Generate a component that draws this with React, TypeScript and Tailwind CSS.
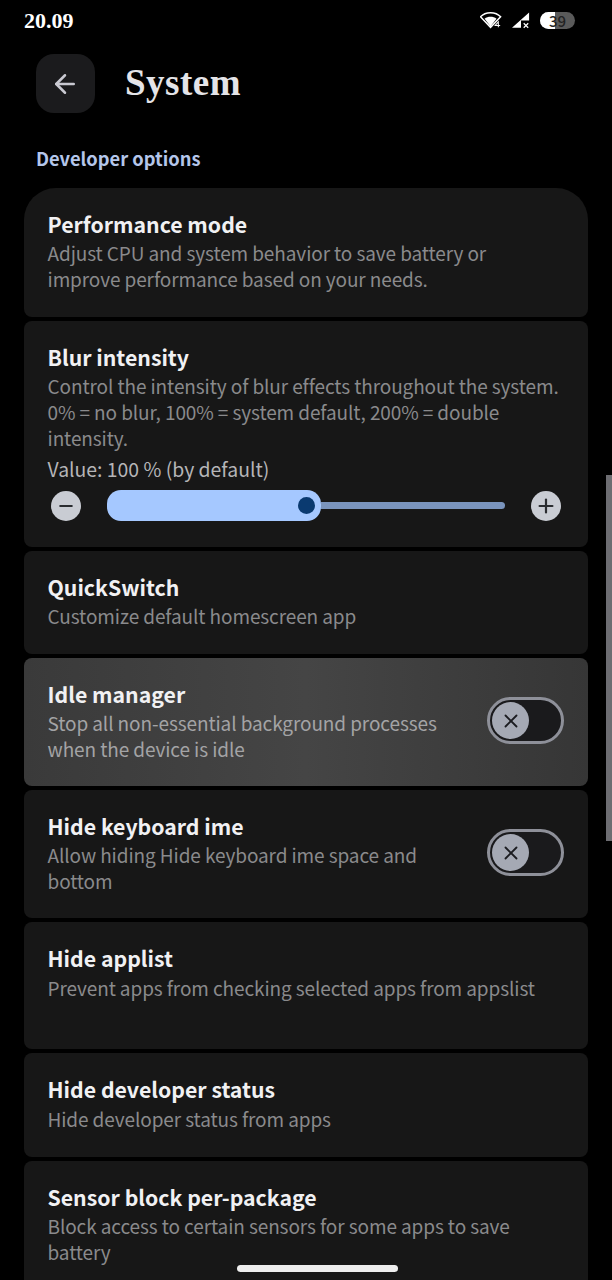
import React from 'react';
import { ArrowLeft, Minus, Plus, X } from 'lucide-react';

const Toggle = () => (
  <div className="w-[77px] h-[47px] shrink-0 rounded-full border-[3px] border-[#8e9099] bg-[#1a1a1c] flex items-center pl-[2px]">
    <div className="w-[37px] h-[37px] rounded-full bg-[#a5a9b4] flex items-center justify-center">
      <X size={22} strokeWidth={2} className="text-[#1b1c20]" />
    </div>
  </div>
);

interface CardProps {
  title: string;
  desc?: string[];
  height: string;
  highlight?: boolean;
  toggle?: boolean;
  top?: boolean;
  loose?: boolean;
  children?: React.ReactNode;
}

const Card = ({ title, desc = [], height, highlight, toggle, top, loose, children }: CardProps) => (
  <div
    className={`${height} shrink-0 pl-[23.5px] pr-6 pt-[22px] flex items-start justify-between ${top ? 'rounded-t-[32px] rounded-b-lg' : 'rounded-lg'} ${
      highlight ? 'bg-gradient-to-r from-[#3a3a3a] via-[#454545] to-[#363636]' : 'bg-[#171717]'
    }`}
  >
    <div className="flex-1 min-w-0">
      <div className={`text-[21.25px] leading-[30px] font-bold text-[#f1f1f3] -mt-px ${loose ? 'mb-[2px]' : 'mb-px'}`}>{title}</div>
      {desc.map((line) => (
        <div
          key={line}
          className={`text-[19px] tracking-[-0.1px] leading-[26px] whitespace-nowrap ${highlight ? 'text-[#a3a3a5]' : 'text-[#8a8a8c]'}`}
        >
          {line}
        </div>
      ))}
      {children}
    </div>
    {toggle && (
      <div className="mt-[17px]">
        <Toggle />
      </div>
    )}
  </div>
);

export default function App() {
  return (
    <div
      className="relative w-[612px] h-[1280px] overflow-hidden bg-black"
      style={{ fontFamily: '"Noto Sans CJK SC", "Noto Sans", sans-serif' }}
    >
      {/* Status bar */}
      <div className="h-[40px] pl-6 pr-[37px] flex items-center justify-between">
        <span className="text-[22px] font-bold text-white" style={{ fontFamily: '"Liberation Serif", serif' }}>
          20.09
        </span>
        <div className="flex items-center gap-[10px]">
          <svg width="22" height="18" viewBox="0 0 24 18">
            <path d="M0.5 5.5 C6 -0.5 17 -0.5 22.5 5.5 L11.5 17 Z" fill="none" stroke="#fff" strokeWidth="1.6" />
            <path d="M5 7.5 C8.5 4.8 14.5 4.8 18 7.5 L11.5 16 Z" fill="#fff" />
            <path d="M20 17 L20 11 L16.5 15 L22 15" fill="none" stroke="#fff" strokeWidth="1.1" />
          </svg>
          <svg width="18" height="17" viewBox="0 0 20 18">
            <path d="M19 0 L19 9 L10 9 L10 17 L0 17 Z" fill="#fff" />
            <path d="M13 12 L18 17 M18 12 L13 17" stroke="#fff" strokeWidth="1.4" />
          </svg>
          <div className="relative w-[35px] h-[17px] rounded-full bg-[#5a5a5a] flex">
            <div className="w-[15px] h-full rounded-l-full bg-white" />
            <span className="absolute inset-0 flex items-center justify-center text-[15px] leading-none font-medium text-[#222]">39</span>
          </div>
        </div>
      </div>

      {/* Header */}
      <div className="mt-[14px] ml-9 flex items-center gap-[30px]">
        <div className="w-[59px] h-[59px] rounded-[18px] bg-[#1b1b1d] flex items-center justify-center">
          <ArrowLeft size={30} strokeWidth={2} className="text-[#c9c9d1] -ml-px" />
        </div>
        <h1 className="text-[37px] tracking-[0.5px] leading-[56px] font-bold text-[#e4e4e8] -mt-[2px]" style={{ fontFamily: '"Liberation Serif", serif' }}>
          System
        </h1>
      </div>

      <div className="mt-[32px] ml-9 h-[26px] text-[18.3px] leading-[26px] font-bold text-[#b4c6ea]">Developer options</div>

      {/* List */}
      <div className="mt-[17px] mx-6 flex flex-col gap-1">
        <Card
          top
          height="h-[129px]"
          title="Performance mode"
          desc={['Adjust CPU and system behavior to save battery or', 'improve performance based on your needs.']}
        />
        <Card
          height="h-[226px]"
          title="Blur intensity"
          desc={[
            'Control the intensity of blur effects throughout the system.',
            '0% = no blur, 100% = system default, 200% = double',
            'intensity.',
          ]}
        >
          <div className="mt-[5px] text-[19.4px] leading-[26px] text-[#b5b5b7]">Value: 100 % (by default)</div>
          <div className="mt-[8px] ml-[3.5px] flex items-center h-[31px]">
            <div className="w-[30px] h-[30px] rounded-full bg-[#c9ccd3] flex items-center justify-center shrink-0">
              <Minus size={20} strokeWidth={2.4} className="text-[#2a2c30]" />
            </div>
            <div className="ml-[26px] flex items-center w-[398px]">
              <div className="relative w-[214px] h-[31px] rounded-[14px] bg-[#a5c8ff]">
                <div className="absolute left-[191px] top-[7px] w-[17px] h-[17px] rounded-full bg-[#0a3a70]" />
              </div>
              <div className="flex-1 h-[7px] rounded-r-full bg-[#7a94bd]" />
            </div>
            <div className="ml-[26px] w-[30px] h-[30px] rounded-full bg-[#c9ccd3] flex items-center justify-center shrink-0">
              <Plus size={22} strokeWidth={2.4} className="text-[#2a2c30]" />
            </div>
          </div>
        </Card>
        <Card height="h-[103px]" title="QuickSwitch" desc={['Customize default homescreen app']} />
        <Card
          highlight
          toggle
          height="h-[128px]"
          title="Idle manager"
          desc={['Stop all non-essential background processes', 'when the device is idle']}
        />
        <Card
          toggle
          height="h-[128px]"
          title="Hide keyboard ime"
          desc={['Allow hiding Hide keyboard ime space and', 'bottom']}
        />
        <Card loose height="h-[127px]" title="Hide applist" desc={['Prevent apps from checking selected apps from appslist']} />
        <Card loose height="h-[104px]" title="Hide developer status" desc={['Hide developer status from apps']} />
        <Card
          height="h-[129px]"
          title="Sensor block per-package"
          desc={['Block access to certain sensors for some apps to save', 'battery']}
        />
      </div>

      {/* Scrollbar */}
      <div className="absolute right-0 top-[475px] w-[6px] h-[366px] bg-[#6d6d72]" />
      {/* Gesture bar */}
      <div className="absolute left-[237px] top-[1265px] w-[161px] h-[7px] rounded-full bg-[#eeeeee]" />
    </div>
  );
}
